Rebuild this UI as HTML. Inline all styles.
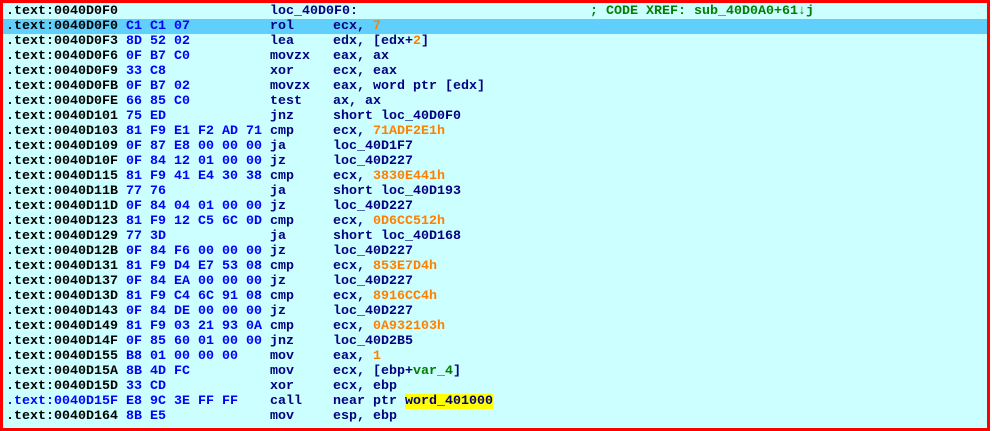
<!DOCTYPE html>
<html><head><meta charset="utf-8"><style>
html,body{margin:0;padding:0;background:#fff;}
#f{position:absolute;left:0;top:0;background:#ccffff;border:3px solid #ff0000;box-sizing:border-box;width:990px;height:431px;overflow:hidden;}
#w{position:absolute;left:0;top:1px;}
.l{position:absolute;left:0px;height:15px;width:985px;font:bold 13.33px/16px "Liberation Mono",monospace;white-space:pre;color:#000;}
.l > span{position:absolute;top:0;}
.a{left:3px;color:#000;}
.x{left:3px;color:#0000ff;}
.b{left:123px;color:#0000ff;}
.m{left:267px;color:#000080;}
.o{left:330px;color:#000080;}
.n{color:#ff8000;}
.g{color:#008000;}
.c{left:587px;color:#008000;}
.h{background:#ffff00;color:#000080;}
.sel{background:#60cffb;}
</style></head><body><div id="f"><div id="w">
<div class="l" style="top:0px"><span class="a">.text:0040D0F0</span><span class="m">loc_40D0F0:</span><span class="c">; CODE XREF: sub_40D0A0+61↓j</span></div>
<div class="l sel" style="top:15px"><span class="a">.text:0040D0F0</span><span class="b">C1 C1 07</span><span class="m">rol</span><span class="o">ecx, <span class="n">7</span></span></div>
<div class="l" style="top:30px"><span class="a">.text:0040D0F3</span><span class="b">8D 52 02</span><span class="m">lea</span><span class="o">edx, [edx+<span class="n">2</span>]</span></div>
<div class="l" style="top:45px"><span class="a">.text:0040D0F6</span><span class="b">0F B7 C0</span><span class="m">movzx</span><span class="o">eax, ax</span></div>
<div class="l" style="top:60px"><span class="a">.text:0040D0F9</span><span class="b">33 C8</span><span class="m">xor</span><span class="o">ecx, eax</span></div>
<div class="l" style="top:75px"><span class="a">.text:0040D0FB</span><span class="b">0F B7 02</span><span class="m">movzx</span><span class="o">eax, word ptr [edx]</span></div>
<div class="l" style="top:90px"><span class="a">.text:0040D0FE</span><span class="b">66 85 C0</span><span class="m">test</span><span class="o">ax, ax</span></div>
<div class="l" style="top:105px"><span class="a">.text:0040D101</span><span class="b">75 ED</span><span class="m">jnz</span><span class="o">short loc_40D0F0</span></div>
<div class="l" style="top:120px"><span class="a">.text:0040D103</span><span class="b">81 F9 E1 F2 AD 71</span><span class="m">cmp</span><span class="o">ecx, <span class="n">71ADF2E1h</span></span></div>
<div class="l" style="top:135px"><span class="a">.text:0040D109</span><span class="b">0F 87 E8 00 00 00</span><span class="m">ja</span><span class="o">loc_40D1F7</span></div>
<div class="l" style="top:150px"><span class="a">.text:0040D10F</span><span class="b">0F 84 12 01 00 00</span><span class="m">jz</span><span class="o">loc_40D227</span></div>
<div class="l" style="top:165px"><span class="a">.text:0040D115</span><span class="b">81 F9 41 E4 30 38</span><span class="m">cmp</span><span class="o">ecx, <span class="n">3830E441h</span></span></div>
<div class="l" style="top:180px"><span class="a">.text:0040D11B</span><span class="b">77 76</span><span class="m">ja</span><span class="o">short loc_40D193</span></div>
<div class="l" style="top:195px"><span class="a">.text:0040D11D</span><span class="b">0F 84 04 01 00 00</span><span class="m">jz</span><span class="o">loc_40D227</span></div>
<div class="l" style="top:210px"><span class="a">.text:0040D123</span><span class="b">81 F9 12 C5 6C 0D</span><span class="m">cmp</span><span class="o">ecx, <span class="n">0D6CC512h</span></span></div>
<div class="l" style="top:225px"><span class="a">.text:0040D129</span><span class="b">77 3D</span><span class="m">ja</span><span class="o">short loc_40D168</span></div>
<div class="l" style="top:240px"><span class="a">.text:0040D12B</span><span class="b">0F 84 F6 00 00 00</span><span class="m">jz</span><span class="o">loc_40D227</span></div>
<div class="l" style="top:255px"><span class="a">.text:0040D131</span><span class="b">81 F9 D4 E7 53 08</span><span class="m">cmp</span><span class="o">ecx, <span class="n">853E7D4h</span></span></div>
<div class="l" style="top:270px"><span class="a">.text:0040D137</span><span class="b">0F 84 EA 00 00 00</span><span class="m">jz</span><span class="o">loc_40D227</span></div>
<div class="l" style="top:285px"><span class="a">.text:0040D13D</span><span class="b">81 F9 C4 6C 91 08</span><span class="m">cmp</span><span class="o">ecx, <span class="n">8916CC4h</span></span></div>
<div class="l" style="top:300px"><span class="a">.text:0040D143</span><span class="b">0F 84 DE 00 00 00</span><span class="m">jz</span><span class="o">loc_40D227</span></div>
<div class="l" style="top:315px"><span class="a">.text:0040D149</span><span class="b">81 F9 03 21 93 0A</span><span class="m">cmp</span><span class="o">ecx, <span class="n">0A932103h</span></span></div>
<div class="l" style="top:330px"><span class="a">.text:0040D14F</span><span class="b">0F 85 60 01 00 00</span><span class="m">jnz</span><span class="o">loc_40D2B5</span></div>
<div class="l" style="top:345px"><span class="a">.text:0040D155</span><span class="b">B8 01 00 00 00</span><span class="m">mov</span><span class="o">eax, <span class="n">1</span></span></div>
<div class="l" style="top:360px"><span class="a">.text:0040D15A</span><span class="b">8B 4D FC</span><span class="m">mov</span><span class="o">ecx, [ebp+<span class="g">var_4</span>]</span></div>
<div class="l" style="top:375px"><span class="a">.text:0040D15D</span><span class="b">33 CD</span><span class="m">xor</span><span class="o">ecx, ebp</span></div>
<div class="l" style="top:390px"><span class="x">.text:0040D15F</span><span class="b">E8 9C 3E FF FF</span><span class="m">call</span><span class="o">near ptr <span class="h">word_401000</span></span></div>
<div class="l" style="top:405px"><span class="a">.text:0040D164</span><span class="b">8B E5</span><span class="m">mov</span><span class="o">esp, ebp</span></div>
</div></div></body></html>
